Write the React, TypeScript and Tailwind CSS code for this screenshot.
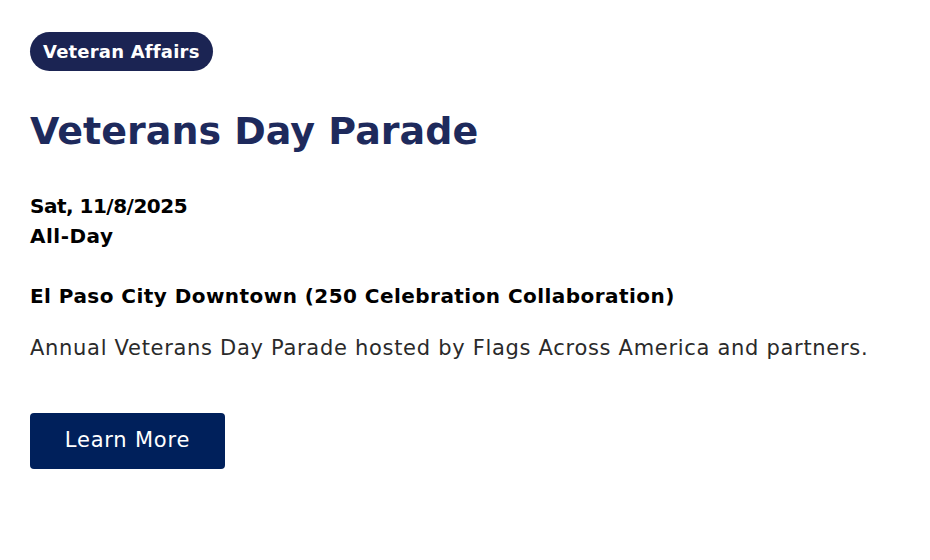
export default function App() {
  return (
    <div className="min-h-screen bg-white font-['DejaVu_Sans',sans-serif]">
      <div className="px-[30px] pt-[32px]">
        <span className="inline-flex h-[39px] items-center rounded-full bg-[#1b2453] px-[13px] text-[18px] font-bold tracking-[0.2px] text-white">
          Veteran Affairs
        </span>

        <h1 className="mt-[36px] text-[38px] leading-[48px] font-bold text-[#1e2a5c]">Veterans Day Parade</h1>

        <div className="mt-[36px] text-[20px] leading-[30px] font-bold text-black">
          <p className="tracking-[-0.5px]">Sat, 11/8/2025</p>
          <p className="tracking-[0.5px]">All-Day</p>
        </div>

        <p className="mt-[30px] text-[20px] leading-[30px] font-bold tracking-[0.45px] text-black">
          El Paso City Downtown (250 Celebration Collaboration)
        </p>

        <p className="mt-[22px] text-[21px] leading-[30px] font-normal tracking-[0.7px] text-[#2a2a2a]">
          Annual Veterans Day Parade hosted by Flags Across America and partners.
        </p>

        <button className="mt-[50px] flex h-[56px] w-[195px] items-center justify-center rounded-[4px] bg-[#00205b] text-[21px] tracking-[0.8px] text-white">
          Learn More
        </button>
      </div>
    </div>
  );
}
